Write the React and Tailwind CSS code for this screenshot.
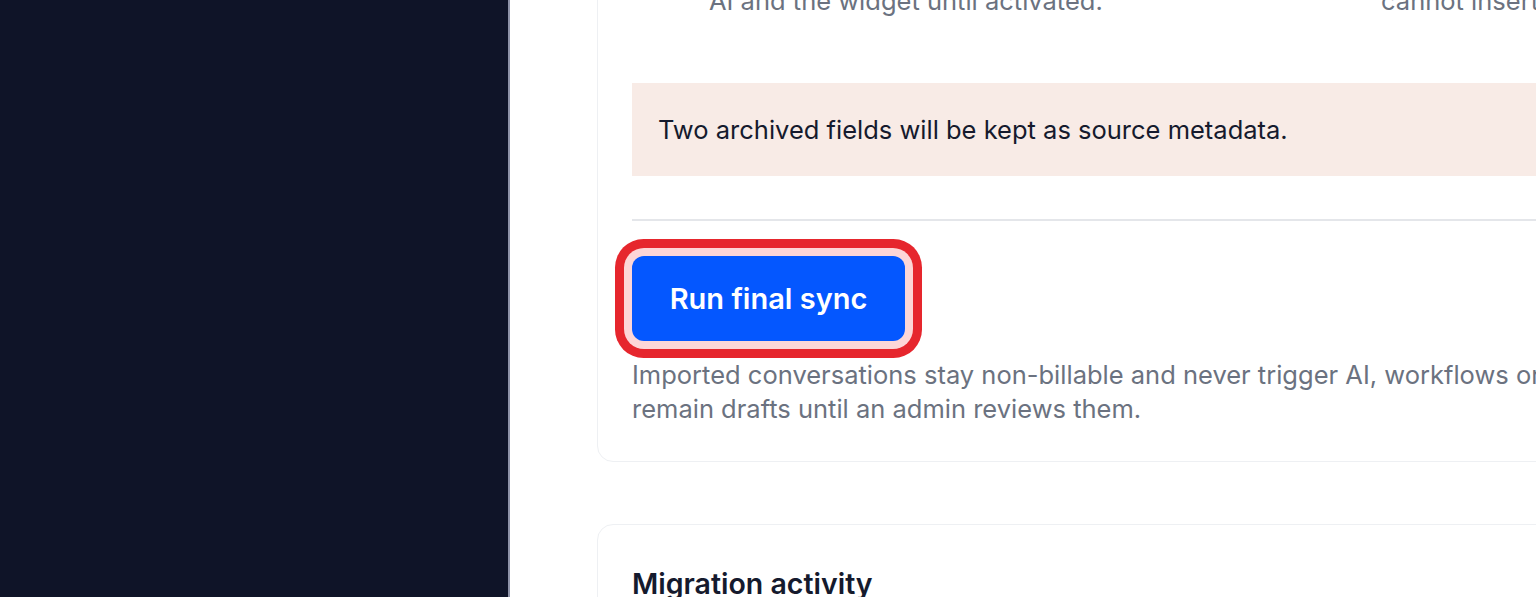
import React from "react";

export default function App() {
  return (
    <div className="flex h-[597px] w-[1536px] overflow-hidden bg-white font-['Inter','Noto_Sans',sans-serif]">
      <aside className="h-full w-[510px] shrink-0 border-r-2 border-[#8e93a8] bg-[#0f1428]" />
      <main className="min-w-0 flex-1 overflow-hidden pl-[87px]">
        <section className="-mt-[51px] w-[1400px] rounded-b-[16px] border border-[#eef0f3] bg-white px-[34px] pb-[35px]">
          <div className="grid grid-cols-[672px_1fr] text-[25.5px] leading-[34px] text-[#6b7280]">
            <div className="pl-[77px]">
              <p>Imported items stay hidden from</p>
              <p>AI and the widget until activated.</p>
            </div>
            <div className="pl-[77px]">
              <p>Agents can read them but</p>
              <p>cannot insert them into replies.</p>
            </div>
          </div>

          <div className="mt-[65px] flex h-[93px] items-center bg-[#f8ebe6] px-[26px] text-[25.5px] leading-[34px] text-[#151a2d]">
            Two archived fields will be kept as source metadata.
          </div>

          <div className="mt-[43px] h-[2px] bg-[#e4e6ea]" />

          <div className="mt-[35px]">
            <button
              type="button"
              className="flex h-[85px] w-[273px] items-center justify-center rounded-[12px] bg-[#0457ff] text-[29px] font-semibold text-white shadow-[0_0_0_8px_#fdd6d7,0_0_0_17px_#e6262d]"
            >
              Run final sync
            </button>
          </div>

          <p className="mt-[17px] text-[25.5px] leading-[34px] text-[#6b7280]">
            Imported conversations stay non-billable and never trigger AI, workflows or
            <br />
            remain drafts until an admin reviews them.
          </p>
        </section>

        <section className="mt-[62px] w-[1400px] rounded-t-[16px] border border-[#eef0f3] bg-white px-[34px] pt-[41px] pb-[40px]">
          <h2 className="text-[28.5px] font-semibold leading-[36px] text-[#151a2d]">Migration activity</h2>
        </section>
      </main>
    </div>
  );
}
